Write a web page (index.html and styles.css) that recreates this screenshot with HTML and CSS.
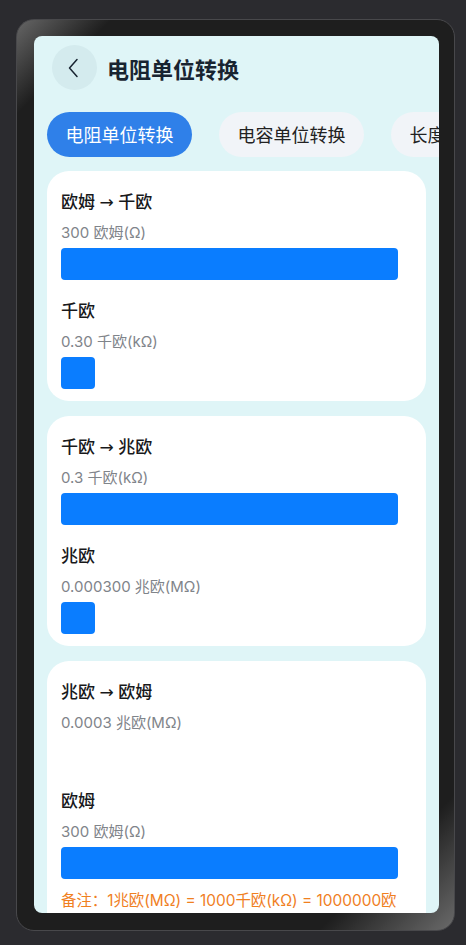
FILE: index.html
```html
<!DOCTYPE html>
<html lang="zh-CN">
  <head>
    <meta charset="UTF-8" />
    <meta name="viewport" content="width=device-width, initial-scale=1.0" />
    <title>电阻单位转换</title>
    <link rel="stylesheet" href="styles.css">
  </head>

  <body>
    <div class="device">
      <div class="screen">
        <div class="header">
          <button class="back-btn" aria-label="返回">
            <svg width="12" height="20" viewBox="0 0 12 20">
              <path d="M10 1.5 L2.5 10 L10 18.5" fill="none" stroke="#182431" stroke-width="1.5" stroke-linecap="round" stroke-linejoin="round" />
            </svg>
          </button>
          <h1 class="page-title">电阻单位转换</h1>
        </div>

        <div class="tabs">
          <div class="tab active">电阻单位转换</div>
          <div class="tab">电容单位转换</div>
          <div class="tab">长度单位转换</div>
        </div>

        <div class="card-list">
          <!-- 欧姆 -> 千欧 -->
          <div class="card">
            <div class="unit-title">欧姆 <span class="arrow">→</span> 千欧</div>
            <div class="unit-value">300 欧姆(Ω)</div>
            <div class="bar-track"><div class="bar" style="width: 100%"></div></div>
            <div class="unit-title second">千欧</div>
            <div class="unit-value">0.30 千欧(kΩ)</div>
            <div class="bar-track"><div class="bar" style="width: 10%"></div></div>
          </div>

          <!-- 千欧 -> 兆欧 -->
          <div class="card">
            <div class="unit-title">千欧 <span class="arrow">→</span> 兆欧</div>
            <div class="unit-value">0.3 千欧(kΩ)</div>
            <div class="bar-track"><div class="bar" style="width: 100%"></div></div>
            <div class="unit-title second">兆欧</div>
            <div class="unit-value">0.000300 兆欧(MΩ)</div>
            <div class="bar-track"><div class="bar" style="width: 10%"></div></div>
          </div>

          <!-- 兆欧 -> 欧姆 -->
          <div class="card">
            <div class="unit-title">兆欧 <span class="arrow">→</span> 欧姆</div>
            <div class="unit-value">0.0003 兆欧(MΩ)</div>
            <div class="bar-track"><div class="bar" style="width: 0%"></div></div>
            <div class="unit-title second">欧姆</div>
            <div class="unit-value">300 欧姆(Ω)</div>
            <div class="bar-track"><div class="bar" style="width: 100%"></div></div>
            <div class="note">备注：1兆欧(MΩ) = 1000千欧(kΩ) = 1000000欧姆(Ω)</div>
          </div>
        </div>
      </div>
    </div>
  </body>
</html>
```

FILE: styles.css
```css
html,
body {
  margin: 0;
  height: 100%;
}

body {
  background-color: #2b2b2f;
  font-family: Inter, "Noto Sans CJK SC", sans-serif;
  padding: 19px 0 0 16px;
  box-sizing: border-box;
  overflow: hidden;
}

.device {
  width: 439px;
  height: 912px;
  box-sizing: border-box;
  padding: 16px 15px 17px 17px;
  border: 1px solid #48484b;
  border-radius: 18px;
  background: linear-gradient(135deg, #666 0%, #1e1e1e 7%, #1e1e1e 90%, #6a6a6a 100%);
}

.screen {
  width: 405px;
  height: 877px;
  background-color: #dff5f7;
  border-radius: 8px;
  overflow: hidden;
}

.header {
  display: flex;
  align-items: center;
  padding: 9px 18px 0;
}

.back-btn {
  width: 45px;
  height: 45px;
  border: none;
  border-radius: 50%;
  background-color: #d4ebee;
  display: flex;
  align-items: center;
  justify-content: center;
  padding: 0 3px 0 0;
  margin: 0;
}

.page-title {
  margin: 0 0 0 10px;
  font-size: 22px;
  font-weight: 700;
  color: #182431;
  font-family: "Noto Sans CJK SC", sans-serif;
}

.tabs {
  display: flex;
  gap: 27px;
  margin-top: 22px;
  padding-left: 13px;
}

.tab {
  flex-shrink: 0;
  width: 145px;
  height: 45px;
  line-height: 45px;
  border-radius: 23px;
  text-align: center;
  font-size: 18px;
  color: #222;
  background-color: #f1f4f8;
  font-family: "Noto Sans CJK SC", sans-serif;
}

.tab.active {
  background-color: #2f80e9;
  color: #fff;
}

.card-list {
  display: flex;
  flex-direction: column;
  gap: 15px;
  margin-top: 14px;
  padding: 0 13px;
}

.card {
  background-color: #fff;
  border-radius: 22px;
  padding: 20px 28px 12px 14px;
}

.unit-title {
  height: 22px;
  font-size: 17px;
  line-height: 22px;
  font-weight: 500;
  color: #18191b;
}

.arrow {
  font-family: "DejaVu Sans", sans-serif;
  font-weight: 400;
  font-size: 17px;
  line-height: 1;
}

.unit-title.second {
  margin-top: 20px;
}

.unit-value {
  height: 20px;
  margin-top: 10px;
  font-size: 15px;
  line-height: 20px;
  color: #7f848a;
}

.bar-track {
  margin-top: 5px;
  height: 32px;
}

.bar {
  height: 32px;
  background-color: #0a7dff;
  border-radius: 4px;
}

.note {
  margin-top: 11px;
  font-size: 15.4px;
  line-height: 21px;
  color: #f0801f;
}
```
